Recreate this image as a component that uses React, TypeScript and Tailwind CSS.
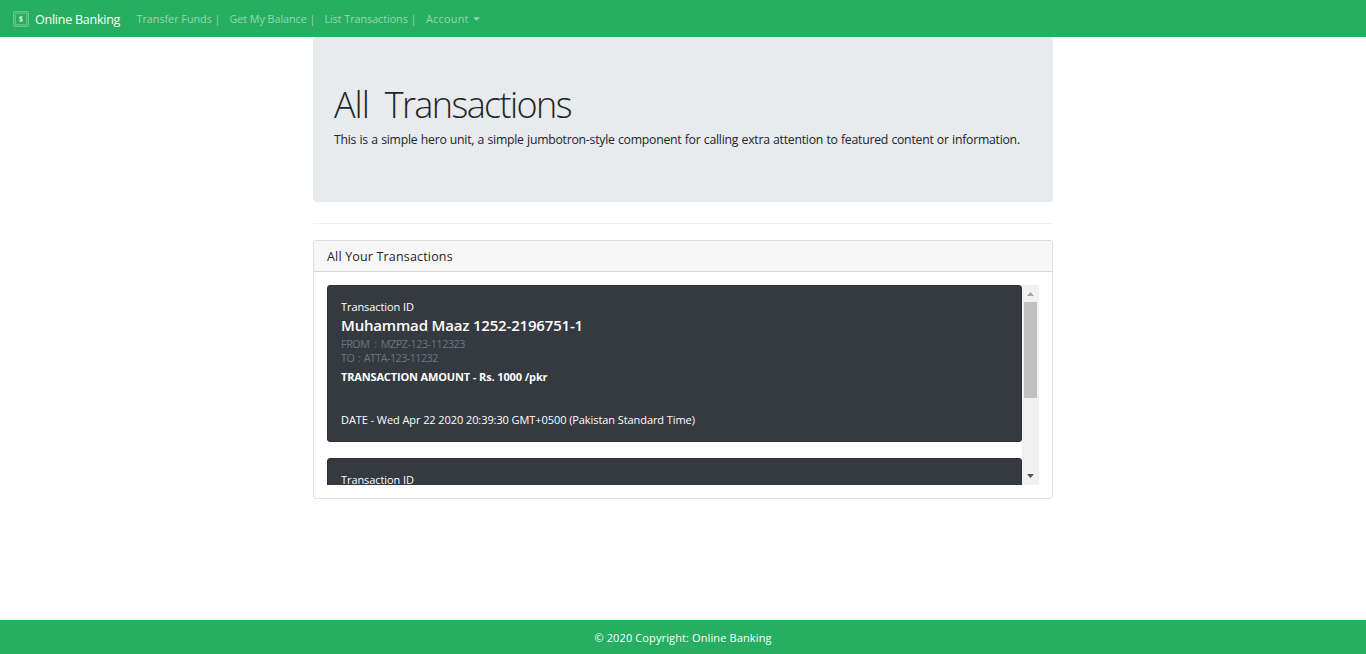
import React from "react";

const navLinks = [
  { label: "Transfer Funds |", className: "w-[93px] tracking-[0px]" },
  { label: "Get My Balance |", className: "w-[95px] tracking-[-0.04px]" },
  { label: "List Transactions |", className: "w-[101px] tracking-[-0.04px]" },
];

const transactions = [
  {
    name: "Muhammad Maaz 1252-2196751-1",
    from: "MZPZ-123-112323",
    to: "ATTA-123-11232",
    amount: "1000",
    date: "Wed Apr 22 2020 20:39:30 GMT+0500 (Pakistan Standard Time)",
  },
  {
    name: "Muhammad Maaz 1252-2196751-1",
    from: "MZPZ-123-112323",
    to: "ATTA-123-11232",
    amount: "1000",
    date: "Wed Apr 22 2020 20:39:30 GMT+0500 (Pakistan Standard Time)",
  },
];

function Logo() {
  return (
    <svg className="mr-1.5 h-4 w-4" viewBox="0 0 16 16" fill="none">
      <rect x="0.5" y="0.5" width="15" height="15" rx="1" fill="#3fb671" stroke="#68c992" />
      <rect x="2.5" y="2.5" width="11" height="11" fill="#28ae60" stroke="#5cc489" />
      <path
        d="M9.7 6.4C9.2 5.7 6.6 5.5 6.6 6.9C6.6 8.2 9.5 7.7 9.5 9.1C9.5 10.5 6.8 10.4 6.2 9.7M8 5V11"
        stroke="#b9e8cc"
        strokeWidth="1.3"
      />
    </svg>
  );
}

function Navbar() {
  return (
    <nav className="flex h-[37px] items-center bg-[#28ae60] pt-px pl-[13px] text-[10.75px] whitespace-nowrap text-[#94d7b0]">
      <span className="-mt-px">
        <Logo />
      </span>
      <a className="w-[101.5px] pt-0.5 text-[12.5px] tracking-[-0.24px] text-white">Online Banking</a>
      {navLinks.map((link) => (
        <a key={link.label} className={link.className}>
          {link.label}
        </a>
      ))}
      <a className="flex items-center pl-[0.5px] tracking-[0.3px]">
        Account
        <svg className="mb-px ml-1 h-1 w-[7px]" viewBox="0 0 7 4">
          <path d="M0 0.3H7L3.5 3.7Z" fill="currentColor" />
        </svg>
      </a>
    </nav>
  );
}

function Transaction({ item }: { item: (typeof transactions)[number] }) {
  return (
    <article className="mb-4 h-[157px] w-[695px] shrink-0 rounded-[3px] border border-[#2d3238] bg-[#343a40] px-[13px] pt-3 text-[11px] whitespace-nowrap text-white">
      <div className="h-[17px] leading-[17px] tracking-[-0.08px]">Transaction ID</div>
      <h5 className="h-5 text-[15px] leading-5 font-semibold tracking-[-0.18px]">{item.name}</h5>
      <div className="mt-0.5 text-[10.75px] leading-[14px] text-[#6c757d]">
        <div className="tracking-[-0.42px] [word-spacing:2px]">FROM : {item.from}</div>
        <div className="tracking-[-0.54px] [word-spacing:1.4px]">TO : {item.to}</div>
      </div>
      <div className="mt-[3px] leading-[18px] font-bold tracking-[-0.16px] [word-spacing:0.15px]">
        TRANSACTION AMOUNT - Rs. {item.amount} /pkr
      </div>
      <div className="mt-[25px] leading-[18px] tracking-[-0.08px]">DATE - {item.date}</div>
    </article>
  );
}

function Scrollbar() {
  return (
    <div className="flex w-[17px] flex-col items-center bg-[#f1f1f1]">
      <svg className="h-[17px] w-[17px]" viewBox="0 0 17 17">
        <path d="M5 11L8.5 7L12 11Z" fill="#a3a3a3" />
      </svg>
      <div className="h-24 w-[13px] bg-[#c1c1c1]" />
      <div className="flex-1" />
      <svg className="h-[17px] w-[17px]" viewBox="0 0 17 17">
        <path d="M5 6L8.5 10L12 6Z" fill="#505050" />
      </svg>
    </div>
  );
}

export default function App() {
  return (
    <div className="flex h-[654px] flex-col overflow-hidden bg-white font-['Open_Sans','Noto_Sans',sans-serif] text-[#212529]">
      <Navbar />
      <main className="mx-auto w-[740px] flex-1">
        <header className="h-[165px] rounded-[4px] bg-[#e7ebee] px-[21px] pt-[46px] whitespace-nowrap">
          <h1 className="h-[44px] text-[36px] leading-[44px] font-light tracking-[-1.6px] [word-spacing:8px]">
            <span className="tracking-[-1px]">All</span> Transactions
          </h1>
          <p className="mt-[3px] text-[12.25px] leading-5 tracking-[-0.25px] [word-spacing:0.4px]">
            This is a simple hero unit, a simple jumbotron-style component for calling extra attention to featured
            content or information.
          </p>
        </header>
        <hr className="mt-[21px] border-[#f0f0f0]" />
        <section className="mt-4 h-[259px] rounded-[3px] border border-[#dedede]">
          <h2 className="h-[31px] rounded-t-[2px] border-b border-[#d8d8d8] bg-[#f7f7f7] px-[13px] text-[12.5px] leading-[31px] tracking-[0.17px]">
            All Your Transactions
          </h2>
          <div className="m-[13px] flex h-[200px] overflow-hidden">
            <div className="flex w-[695px] flex-col overflow-hidden">
              {transactions.map((item, i) => (
                <Transaction key={i} item={item} />
              ))}
            </div>
            <Scrollbar />
          </div>
        </section>
      </main>
      <footer className="h-[34px] bg-[#28ae60] text-center text-[11px] leading-[35px] tracking-[0.12px] text-white">
        © 2020 Copyright: Online Banking
      </footer>
    </div>
  );
}
